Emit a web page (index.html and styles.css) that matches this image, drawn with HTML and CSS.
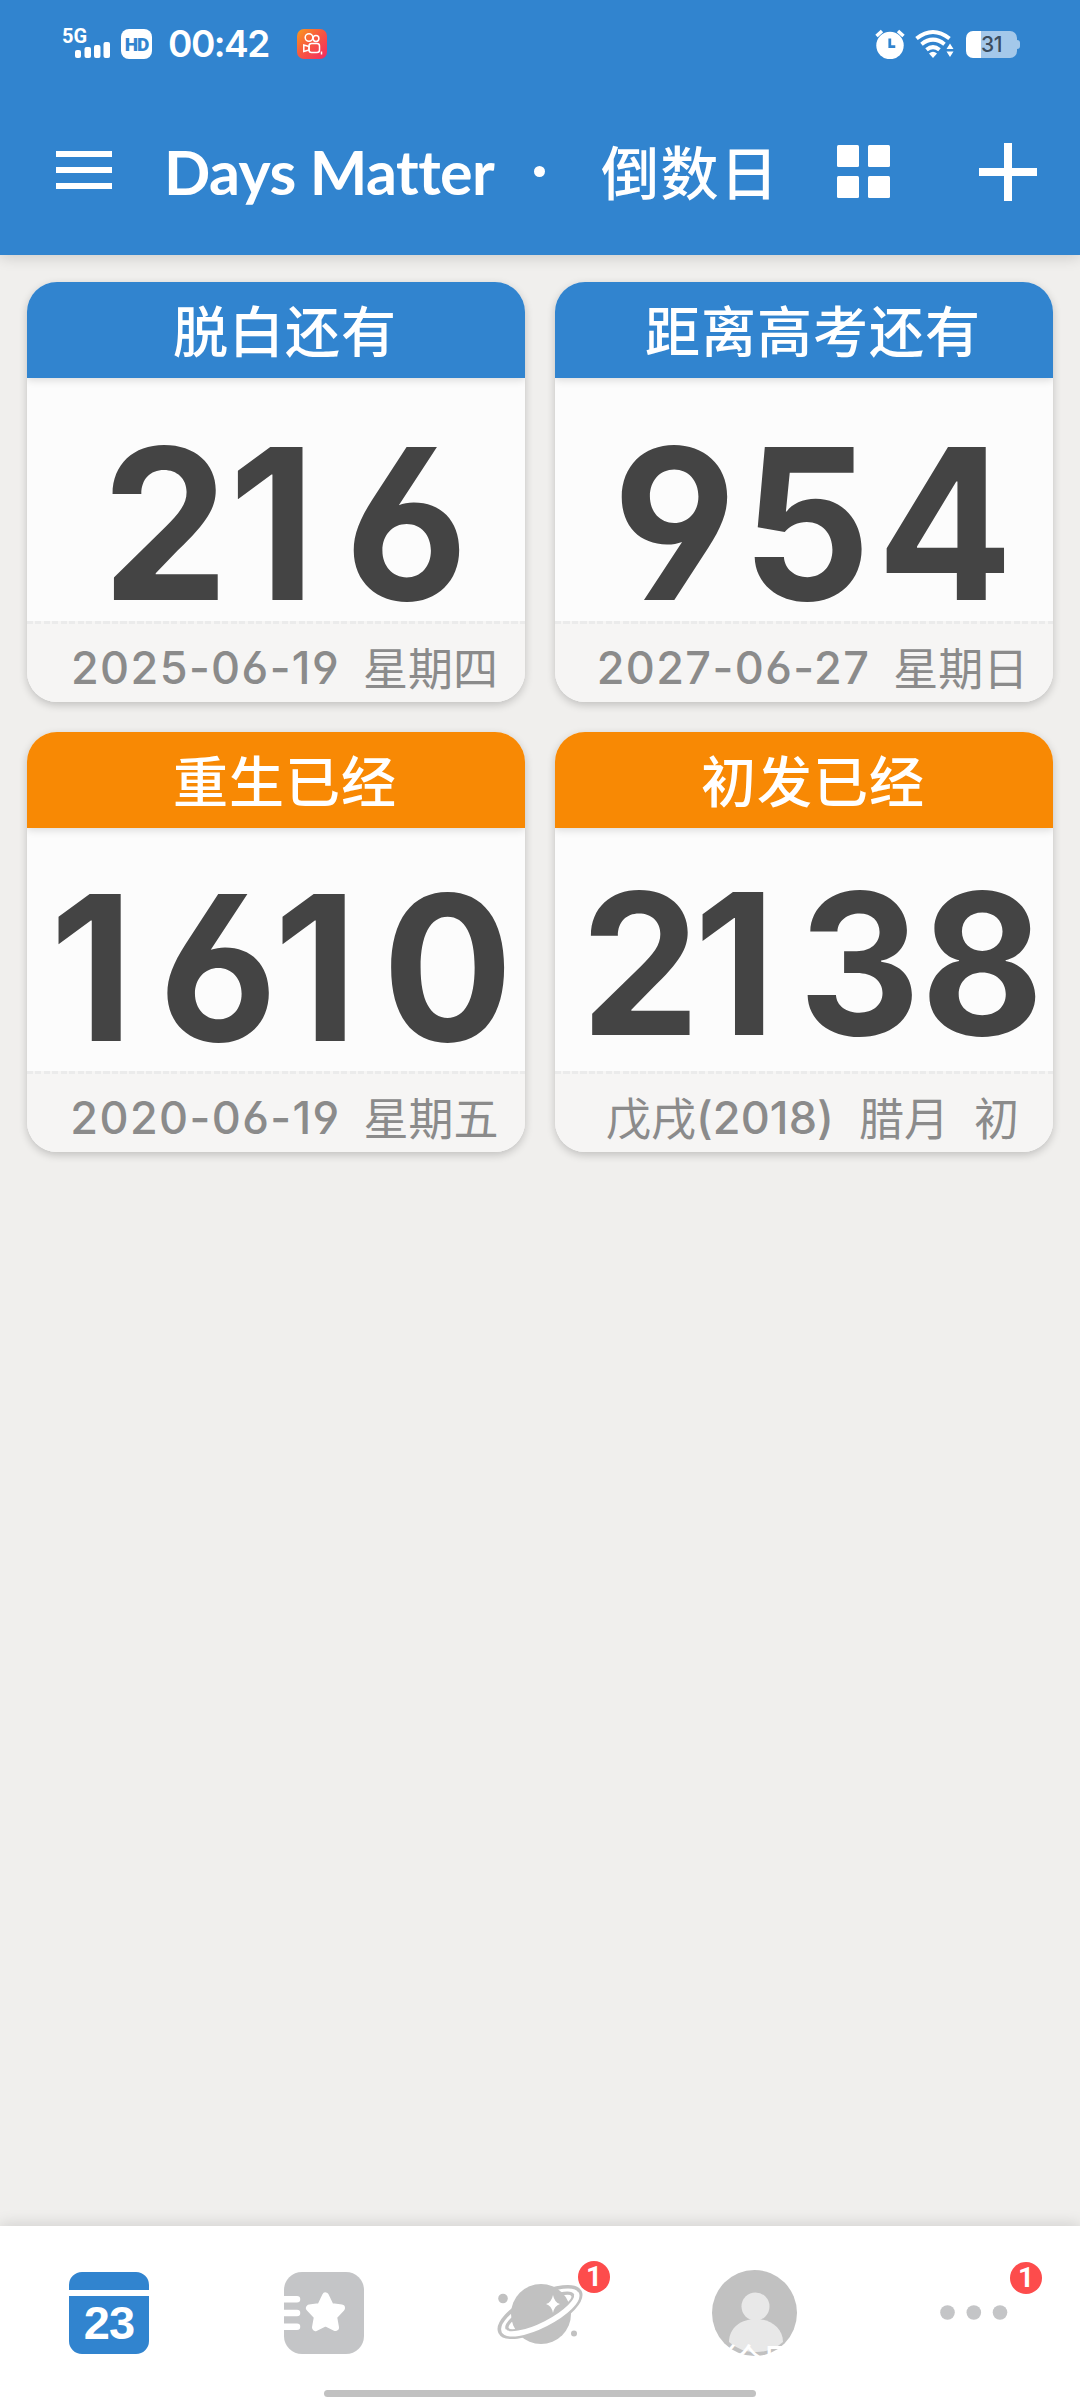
FILE: index.html
```html
<!DOCTYPE html>
<html lang="zh-CN">
<head>
<meta charset="utf-8">
<title>Days Matter · 倒数日</title>
<link rel="stylesheet" href="styles.css">
</head>
<body>
<div class="app">
  <header class="top">
    <div class="status">
      <div class="status-left">
        <svg class="signal" viewBox="0 0 50 34" width="50" height="34">
          <text x="0" y="15.500" class="net">5G</text>
          <rect x="13" y="23" width="6" height="8" rx="2"/><rect x="22.500" y="20" width="6.500" height="11" rx="2"/><rect x="32" y="18" width="6.500" height="13" rx="2"/><rect x="41.500" y="15" width="6.500" height="16" rx="2"/>
        </svg>
        <span class="hd">HD</span>
        <span class="clock">00:42</span>
        <svg class="kuai" viewBox="0 0 30 30" width="30" height="30">
          <defs><linearGradient id="kg" x1="0" y1="0" x2="1" y2="1"><stop offset="0" stop-color="#f99a1c"/><stop offset=".45" stop-color="#f8593f"/><stop offset="1" stop-color="#f32a63"/></linearGradient></defs>
          <rect width="30" height="30" rx="7" fill="url(#kg)"/>
          <g fill="none" stroke="#fff" stroke-width="1.500"><circle cx="12" cy="8.500" r="3.800"/><circle cx="19" cy="9.500" r="2.900"/><rect x="12" y="14.500" width="10.500" height="9" rx="2.500"/><path d="M12 17.500 6.800 16v6.500l5.200-1.500z"/><path d="M24.500 22.500v3"/></g>
        </svg>
      </div>
      <div class="status-right">
        <svg viewBox="0 0 30 30" width="30" height="30">
          <circle cx="15" cy="16.500" r="13.700" fill="#fff"/>
          <path d="M1.500 7 7 2M28.500 7 23 2" stroke="#fff" stroke-width="3.500"/>
          <path d="M14.800 9.500v8.200h5.500" fill="none" stroke="#3184cf" stroke-width="2.800"/>
        </svg>
        <svg class="wifi" viewBox="0 0 40 30" width="40" height="30">
          <g fill="none" stroke="#fff" stroke-width="4"><path d="M1.500 9.500Q18 -3.500 34.500 9.500"/><path d="M6.500 15.200Q18 6 29.500 15.200"/><path d="M11.500 20.700Q18 15.500 24.500 20.700"/></g>
          <path d="M14 24.500Q18 21 22 24.500L18 29z" fill="#fff"/>
          <path d="M31.500 20 35 14.500 38.500 20zM31.500 22.500 35 28 38.500 22.500z" fill="#fff"/>
        </svg>
        <span class="battery"><span class="level">31</span></span>
      </div>
    </div>
    <div class="bar">
      <svg class="menu" viewBox="0 0 56 38" width="56" height="38" fill="#fff"><path d="M0 0h56v6H0zM0 16h56v6H0zM0 32h56v6H0z"/></svg>
      <h1 class="title"><span class="latin">Days Matter</span><span class="dot"></span><span class="cn">倒数日</span></h1>
      <svg class="grid-icon" viewBox="0 0 53 53" width="53" height="53" fill="#fff"><rect width="22" height="22" rx="1.500"/><rect x="31" width="22" height="22" rx="1.500"/><rect y="31" width="22" height="22" rx="1.500"/><rect x="31" y="31" width="22" height="22" rx="1.500"/></svg>
      <svg class="plus" viewBox="0 0 58 58" width="58" height="58" fill="#fff"><path d="M25 0h8v25h25v8H33v25h-8V33H0v-8h25z"/></svg>
    </div>
  </header>

  <main class="cards">
    <article class="card">
      <h2>脱白还有</h2>
      <div class="count"><span class="n3">2<i>1</i>6</span></div>
      <footer><span class="date">2025-06-19</span><span class="day">星期四</span></footer>
    </article>
    <article class="card">
      <h2>距离高考还有</h2>
      <div class="count"><span class="n3">954</span></div>
      <footer><span class="date">2027-06-27</span><span class="day">星期日</span></footer>
    </article>
    <article class="card past">
      <h2>重生已经</h2>
      <div class="count"><span class="n4"><i>1</i>6<i>1</i>0</span></div>
      <footer><span class="date">2020-06-19</span><span class="day">星期五</span></footer>
    </article>
    <article class="card past">
      <h2>初发已经</h2>
      <div class="count"><span class="n4 small">2<i>1</i>38</span></div>
      <footer><span class="era">戊戌</span><span class="year">(2018)</span><span class="day">腊月</span><span class="day">初</span></footer>
    </article>
  </main>

  <nav class="tabs">
    <div class="tab">
      <svg class="calendar" viewBox="0 0 82 82" width="82" height="82"><path d="M1 18V13A13 13 0 0 1 14 0H68A13 13 0 0 1 81 13V18zM1 24H81V69A13 13 0 0 1 68 82H14A13 13 0 0 1 1 69z" fill="#3184cf"/><text x="41" y="67" class="cal">23</text></svg>
    </div>
    <div class="tab">
      <svg viewBox="0 0 82 82" width="82" height="82"><rect x="1" width="80" height="82" rx="18" fill="#c4c5c7"/>
        <path d="M0 27.300H14M0 41H14M0 54.800H14" stroke="#fff" stroke-width="6.500" stroke-linecap="round"/>
        <path d="M42.500 24 47.500 34.500 58.500 36 50.500 44.500 52.500 55.500 42.500 50.500 32.500 55.500 34.500 44.500 26.500 36 37.500 34.500z" fill="#fff" stroke="#fff" stroke-width="7" stroke-linejoin="round"/></svg>
    </div>
    <div class="tab">
      <svg viewBox="0 0 90 70" width="90" height="70">
        <g transform="rotate(-27 45 34)" fill="none">
          <ellipse cx="45" cy="34" rx="44.800" ry="16.800" stroke="#c1c1c1" stroke-width="3.600"/>
          <ellipse cx="45" cy="34" rx="36.800" ry="9.500" stroke="#c1c1c1" stroke-width="3.400"/>
        </g>
        <circle cx="46" cy="36" r="30" fill="#c1c1c1"/>
        <g transform="rotate(-27 45 34)" fill="none">
          <path d="M4.300 34A40.700 13 0 0 0 85.700 34" stroke="#fff" stroke-width="5.500"/>
        </g>
        <path d="M58 17Q59.500 24.500 65 26Q59.500 27.500 58 35Q56.500 27.500 51 26Q56.500 24.500 58 17z" fill="#fff"/>
        <circle cx="8" cy="20.500" r="4.800" fill="#c1c1c1"/><circle cx="79" cy="55.500" r="3" fill="#c1c1c1"/>
      </svg>
      <span class="badge planet-badge">1</span>
    </div>
    <div class="tab">
      <svg class="avatar" viewBox="0 0 85 86" width="85" height="86"><defs><clipPath id="av"><ellipse cx="42.500" cy="43" rx="42.500" ry="43"/></clipPath></defs>
        <g clip-path="url(#av)"><rect width="85" height="86" fill="#c1c1c1"/><circle cx="43.500" cy="36.500" r="14" fill="#e8e8e8"/><path d="M17 72C17 58 29 49 43.500 49S71 58 71 72Q60 82 44 82T17 72z" fill="#e8e8e8"/></g>
        <text x="10" y="110" class="mark">徐同</text></svg>
    </div>
    <div class="tab">
      <svg class="more" viewBox="0 0 68 15" width="68" height="15" fill="#c4c5c7"><circle cx="7.500" cy="7.500" r="7.300"/><circle cx="33.800" cy="7.500" r="7.300"/><circle cx="60" cy="7.500" r="7.300"/></svg>
      <span class="badge more-badge">1</span>
    </div>
    <div class="home-bar"></div>
  </nav>
</div>
</body>
</html>
```
FILE: styles.css
```css
* { box-sizing: border-box; margin: 0; padding: 0; }
body { background: #f0efed; font-family: Inter, "Noto Sans CJK SC", sans-serif; }
svg { display: block; flex: none; }
.app { width: 1080px; height: 2400px; display: flex; flex-direction: column; overflow: hidden; }

.top { height: 255px; background: #3184cf; color: #fff; box-shadow: 0 2px 14px rgba(0, 0, 0, .16); }
.status { height: 88px; padding: 0 63px 0 62px; display: flex; justify-content: space-between; }
.status-left, .status-right { display: flex; align-items: center; }
.signal { fill: #fff; overflow: visible; }
.net { font: 700 20px Roboto, sans-serif; }
.hd { margin-left: 9px; width: 31px; height: 30px; border-radius: 8px; background: #fff; color: #3184cf; font: 900 19px/31px Roboto, sans-serif; text-align: center; letter-spacing: -1px; }
.clock { margin-left: 16px; width: 101px; font-size: 37px; font-weight: 600; line-height: 44px; letter-spacing: -1.500px; white-space: nowrap; }
.kuai { margin-left: 28px; }
.wifi { margin-left: 10px; }
.battery { position: relative; margin-left: 11px; width: 51px; height: 27px; border-radius: 7px; background: linear-gradient(90deg, #fff 15px, #a4c8ea 15px); color: #3a4c5e; text-align: center; }
.battery::after { content: ""; position: absolute; right: -3px; top: 9px; width: 3px; height: 9px; border-radius: 0 3px 3px 0; background: #a4c8ea; }
.level { font: 500 21px/27px Inter, sans-serif; letter-spacing: -.500px; }

.bar { height: 167px; padding: 0 43px 0 56px; display: flex; align-items: center; }
.menu { margin-top: -3px; }
.title { display: flex; align-items: center; margin-left: 52px; width: 673px; height: 90px; font-weight: 700; }
.latin { font: 700 61px/90px Lato, sans-serif; letter-spacing: -.600px; width: 370px; white-space: nowrap; }
.dot { width: 11px; height: 11px; border-radius: 50%; background: #fff; }
.cn { margin: -4px 0 0 56px; font: 500 58px/90px "Noto Sans CJK SC", sans-serif; letter-spacing: 1.500px; }
.plus { margin-left: auto; }

.cards { flex: 1; padding: 27px; display: grid; grid-template-columns: 498px 498px; grid-auto-rows: 420px; gap: 30px; align-content: start; }
.card { display: flex; flex-direction: column; border-radius: 30px; overflow: hidden; background: #fcfcfc; box-shadow: 0 3px 8px rgba(0, 0, 0, .2); }
.card h2 { height: 96px; padding-left: 18px; background: #3184cf; color: #fff; font: 500 55px/92px "Noto Sans CJK SC", sans-serif; letter-spacing: 1px; text-align: center; box-shadow: 0 2px 8px rgba(0, 0, 0, .14); }
.past h2 { background: #f88904; }
.count { height: 243px; padding-left: 17px; display: flex; justify-content: center; color: #444; font-weight: 700; font-feature-settings: "cv03", "cv04"; }
.count span { display: block; white-space: nowrap; transform: scaleX(.96); }
.count i { font-style: normal; margin: 0 24px 0 -6px; }
.n3 { font-size: 210px; line-height: 292px; letter-spacing: 6px; margin-right: -6px; }
.n4 { font-size: 202px; line-height: 280px; letter-spacing: 2px; margin-right: -2px; }
.n4.small { font-size: 197px; line-height: 272px; letter-spacing: 0; margin-right: 0; }
.card footer { flex: 1; padding: 10px 0 0 17px; display: flex; justify-content: center; align-items: center; background: #f6f5f4 repeating-linear-gradient(90deg, #ebebeb 0 6px, transparent 6px 8.500px) 0 0 / 100% 3px no-repeat; color: #8b8b8b; font-size: 45px; font-weight: 500; line-height: 60px; white-space: nowrap; font-feature-settings: "cv03", "cv04"; }
.date { letter-spacing: 1.400px; padding-top: 3px; }
.year { letter-spacing: .200px; padding-top: 3px; }
.era, .day { font: 400 45px/60px "Noto Sans CJK SC", sans-serif; }
.day { margin-left: 25px; }
.date + .day { margin-left: 23px; }

.tabs { position: relative; height: 174px; padding-bottom: 1px; display: grid; grid-template-columns: repeat(5, 216px); background: #fff; box-shadow: 0 -2px 14px rgba(0, 0, 0, .13); }
.tab { position: relative; display: flex; justify-content: center; align-items: center; }
.calendar { margin-left: 2px; }
.cal { font: 700 47px "Liberation Sans", sans-serif; fill: #fff; text-anchor: middle; letter-spacing: -1px; }
.avatar { margin-left: -4px; overflow: visible; }
.more { margin-left: 3px; }
.mark { font: 400 42px "Noto Sans CJK SC", sans-serif; fill: #fff; }
.badge { position: absolute; width: 32px; height: 32px; border-radius: 50%; background: #fd4c4c; color: #fff; font: 700 28px/32px Roboto, sans-serif; text-align: center; }
.planet-badge { left: 146px; top: 35px; }
.more-badge { left: 146px; top: 36px; }
.home-bar { position: absolute; left: 324px; bottom: 3px; width: 432px; height: 7px; border-radius: 4px; background: #c1c1c1; }
```
